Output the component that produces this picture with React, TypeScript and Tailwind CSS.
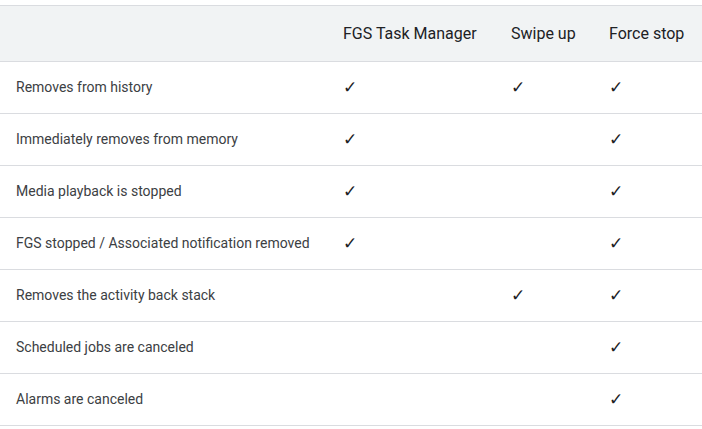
import React from "react";

const rows: { label: string; fgs: boolean; swipe: boolean; force: boolean }[] = [
  { label: "Removes from history", fgs: true, swipe: true, force: true },
  { label: "Immediately removes from memory", fgs: true, swipe: false, force: true },
  { label: "Media playback is stopped", fgs: true, swipe: false, force: true },
  { label: "FGS stopped / Associated notification removed", fgs: true, swipe: false, force: true },
  { label: "Removes the activity back stack", fgs: false, swipe: true, force: true },
  { label: "Scheduled jobs are canceled", fgs: false, swipe: false, force: true },
  { label: "Alarms are canceled", fgs: false, swipe: false, force: true },
];

const cols = "grid grid-cols-[327px_168px_98px_1fr]";

function Check({ on }: { on: boolean }) {
  return <div className="pl-4 text-[17px] leading-none text-[#202124]">{on ? "✓" : ""}</div>;
}

export default function App() {
  return (
    <div className="w-[702px] h-[429px] bg-white pt-[5px] font-['Roboto',sans-serif]">
      <div className="border-t border-[#dadce0]">
        <div className={`${cols} h-[56px] items-center bg-[#f1f3f4] border-b border-[#dadce0] text-[16px] text-[#202124]`}>
          <div />
          <div className="pl-4">FGS Task Manager</div>
          <div className="pl-4">Swipe up</div>
          <div className="pl-4">Force stop</div>
        </div>
        {rows.map((r) => (
          <div
            key={r.label}
            className={`${cols} h-[52px] items-center border-b border-[#dadce0] text-[14px] text-[#3c4043]`}
          >
            <div className="pl-4">{r.label}</div>
            <Check on={r.fgs} />
            <Check on={r.swipe} />
            <Check on={r.force} />
          </div>
        ))}
      </div>
    </div>
  );
}
